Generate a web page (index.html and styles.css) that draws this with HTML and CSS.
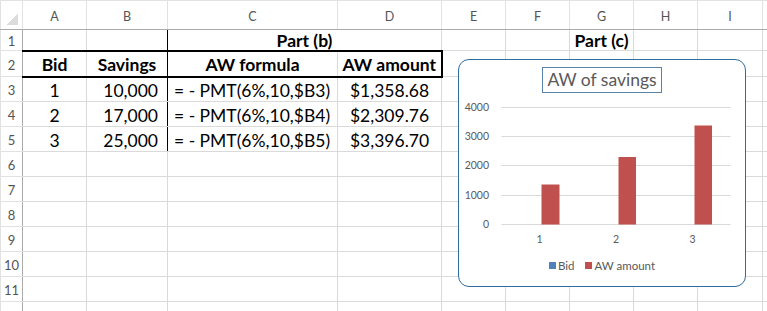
FILE: index.html
```html
<!DOCTYPE html>
<html>
<head>
<meta charset="utf-8">
<title>AW of savings</title>
<link rel="stylesheet" href="styles.css">
</head>
<body>
<div class="sheet">
  <table class="grid">
    <colgroup>
      <col class="c-hd"><col class="c-a"><col class="c-b"><col class="c-c"><col class="c-d">
      <col class="c-n"><col class="c-n"><col class="c-n"><col class="c-n"><col class="c-i"><col class="c-end">
    </colgroup>
    <!-- column letters -->
    <tr class="r-head">
      <th class="corner"></th><th>A</th><th>B</th><th>C</th><th>D</th><th>E</th><th>F</th><th>G</th><th>H</th><th>I</th><th></th>
    </tr>
    <tr class="r-1">
      <th class="num">1</th><td class="top-thick"></td><td class="top-thick split"></td><td class="top-thick title" colspan="2">Part (b)</td><td></td><td></td><td class="title">Part (c)</td><td></td><td></td><td></td>
    </tr>
    <tr class="r-2">
      <th class="num">2</th><td class="head">Bid</td><td class="head split">Savings</td><td class="head">AW formula</td><td class="head last">AW amount</td><td></td><td></td><td></td><td></td><td></td><td></td>
    </tr>
    <tr>
      <th class="num">3</th><td class="mid">1</td><td class="amt split">10,000</td><td class="formula">= - PMT(6%,10,$B3)</td><td class="mid">$1,358.68</td><td></td><td></td><td></td><td></td><td></td><td></td>
    </tr>
    <tr>
      <th class="num">4</th><td class="mid">2</td><td class="amt split">17,000</td><td class="formula">= - PMT(6%,10,$B4)</td><td class="mid">$2,309.76</td><td></td><td></td><td></td><td></td><td></td><td></td>
    </tr>
    <tr>
      <th class="num">5</th><td class="mid">3</td><td class="amt split">25,000</td><td class="formula">= - PMT(6%,10,$B5)</td><td class="mid">$3,396.70</td><td></td><td></td><td></td><td></td><td></td><td></td>
    </tr>
    <tr><th class="num">6</th><td></td><td></td><td></td><td></td><td></td><td></td><td></td><td></td><td></td><td></td></tr>
    <tr><th class="num">7</th><td></td><td></td><td></td><td></td><td></td><td></td><td></td><td></td><td></td><td></td></tr>
    <tr><th class="num">8</th><td></td><td></td><td></td><td></td><td></td><td></td><td></td><td></td><td></td><td></td></tr>
    <tr><th class="num">9</th><td></td><td></td><td></td><td></td><td></td><td></td><td></td><td></td><td></td><td></td></tr>
    <tr><th class="num">10</th><td></td><td></td><td></td><td></td><td></td><td></td><td></td><td></td><td></td><td></td></tr>
    <tr><th class="num">11</th><td></td><td></td><td></td><td></td><td></td><td></td><td></td><td></td><td></td><td></td></tr>
    <tr><th class="num"></th><td></td><td></td><td></td><td></td><td></td><td></td><td></td><td></td><td></td><td></td></tr>
  </table>

  <!-- chart floating over the cells -->
  <div class="chart">
    <div class="chart-title"><span>AW of savings</span></div>
    <svg class="plot" width="285" height="150" viewBox="0 0 285 150">
      <g stroke="#d9d9d9" stroke-width="1">
        <line x1="42.5" y1="8.5" x2="271.5" y2="8.5"/>
        <line x1="42.5" y1="37.5" x2="271.5" y2="37.5"/>
        <line x1="42.5" y1="66.5" x2="271.5" y2="66.5"/>
        <line x1="42.5" y1="96.5" x2="271.5" y2="96.5"/>
        <line x1="42.5" y1="125.5" x2="271.5" y2="125.5"/>
      </g>
      <g class="axis" text-anchor="end">
        <text x="30" y="12.3">4000</text>
        <text x="30" y="41.3">3000</text>
        <text x="30" y="70.3">2000</text>
        <text x="30" y="100.3">1000</text>
        <text x="30" y="129.3">0</text>
      </g>
      <g fill="#c0504d">
        <rect x="82.5" y="85.5" width="18" height="40"/>
        <rect x="159.5" y="58" width="17.5" height="67.5"/>
        <rect x="235.5" y="26.5" width="17.5" height="99"/>
      </g>
      <g class="axis" text-anchor="middle">
        <text x="80.5" y="144">1</text>
        <text x="157" y="144">2</text>
        <text x="233.5" y="144">3</text>
      </g>
    </svg>
    <div class="legend">
      <span class="key"><i class="sw bid"></i>Bid</span>
      <span class="key"><i class="sw aw"></i>AW amount</span>
    </div>
  </div>
</div>
</body>
</html>
```

FILE: styles.css
```css
*{
    margin: 0;
    padding: 0;
}
body{
    background: #fff;
    overflow: hidden;
    font-family: "Lato", "Open Sans", sans-serif;
}
/* sheet area */
.sheet{
    position: relative;
    width: 767px;
    height: 311px;
    overflow: hidden;
}
.grid{
    border-collapse: collapse;
    table-layout: fixed;
    width: 772px;
}
.c-hd{ width: 22px; }
.c-a{ width: 64px; }
.c-b{ width: 81px; }
.c-c{ width: 170px; }
.c-d{ width: 104px; }
.c-n{ width: 64px; }
.c-i{ width: 65px; }
.c-end{ width: 10px; }

.grid tr{ height: 25px; }
.grid tr.r-head{ height: 29px; }
.grid tr.r-1{ height: 21px; }
.grid tr.r-2{ height: 26px; }

.grid td{
    border: 1px solid #dadada;
    padding: 0;
    font-size: 17.5px;
    line-height: 17px;
    color: #000;
    white-space: nowrap;
    overflow: hidden;
    vertical-align: middle;
}
/* headers */
.grid th{
    border: 1px solid #e2e2e2;
    font-weight: normal;
    color: #555;
    background: #fff;
    vertical-align: middle;
}
.r-head th{
    border-bottom-color: #ababab;
    font-size: 12.5px;
    padding-top: 3px;
}
.grid th.num{
    border-right-color: #ababab;
    font-size: 13px;
    padding-top: 2px;
}
.corner{
    background: linear-gradient(135deg, transparent 50%, #dcdcdc 50%) no-repeat right 4px bottom 4px / 11px 11px !important;
}
/* table borders */
.top-thick{
    border-bottom: 2px solid #000 !important;
}
.r-2 td.head{
    border-bottom: 2px solid #000;
}
.grid td.split{
    border-right: 1px solid #000;
}
.grid td.last{
    border-right: 2px solid #000;
}
/* cell text */
.title{
    font-weight: bold;
    text-align: center;
    padding-top: 1px !important;
}
.head{
    font-weight: bold;
    text-align: center;
    padding-top: 2px !important;
}
.mid{
    text-align: center;
    padding-top: 2px !important;
}
.amt{
    text-align: right;
    padding: 2px 9px 0 0 !important;
}
.formula{
    padding: 2px 0 0 6px !important;
}
/* chart */
.chart{
    position: absolute;
    left: 458px;
    top: 59px;
    width: 288px;
    height: 228px;
    box-sizing: border-box;
    border: 1.5px solid #2f6da0;
    border-radius: 11px;
    background: #fff;
}
.chart-title{
    display: flex;
    justify-content: center;
    margin-top: 6.5px;
}
.chart-title span{
    border: 1px solid #5a82a8;
    height: 24px;
    line-height: 24px;
    padding: 0 4px;
    font-size: 17.5px;
    color: #595959;
}
.plot{
    display: block;
    margin-top: 6px;
}
.axis{
    font-family: "Lato", sans-serif;
    font-size: 10.5px;
    fill: #595959;
}
.legend{
    display: flex;
    justify-content: center;
    gap: 11px;
    margin-top: 10px;
    font-size: 11.5px;
    line-height: 14px;
    color: #595959;
}
.key{
    display: flex;
    align-items: center;
    gap: 2px;
}
.sw{
    display: inline-block;
    width: 7px;
    height: 7px;
}
.sw.bid{ background: #4f81bd; }
.sw.aw{ background: #c0504d; }
```
